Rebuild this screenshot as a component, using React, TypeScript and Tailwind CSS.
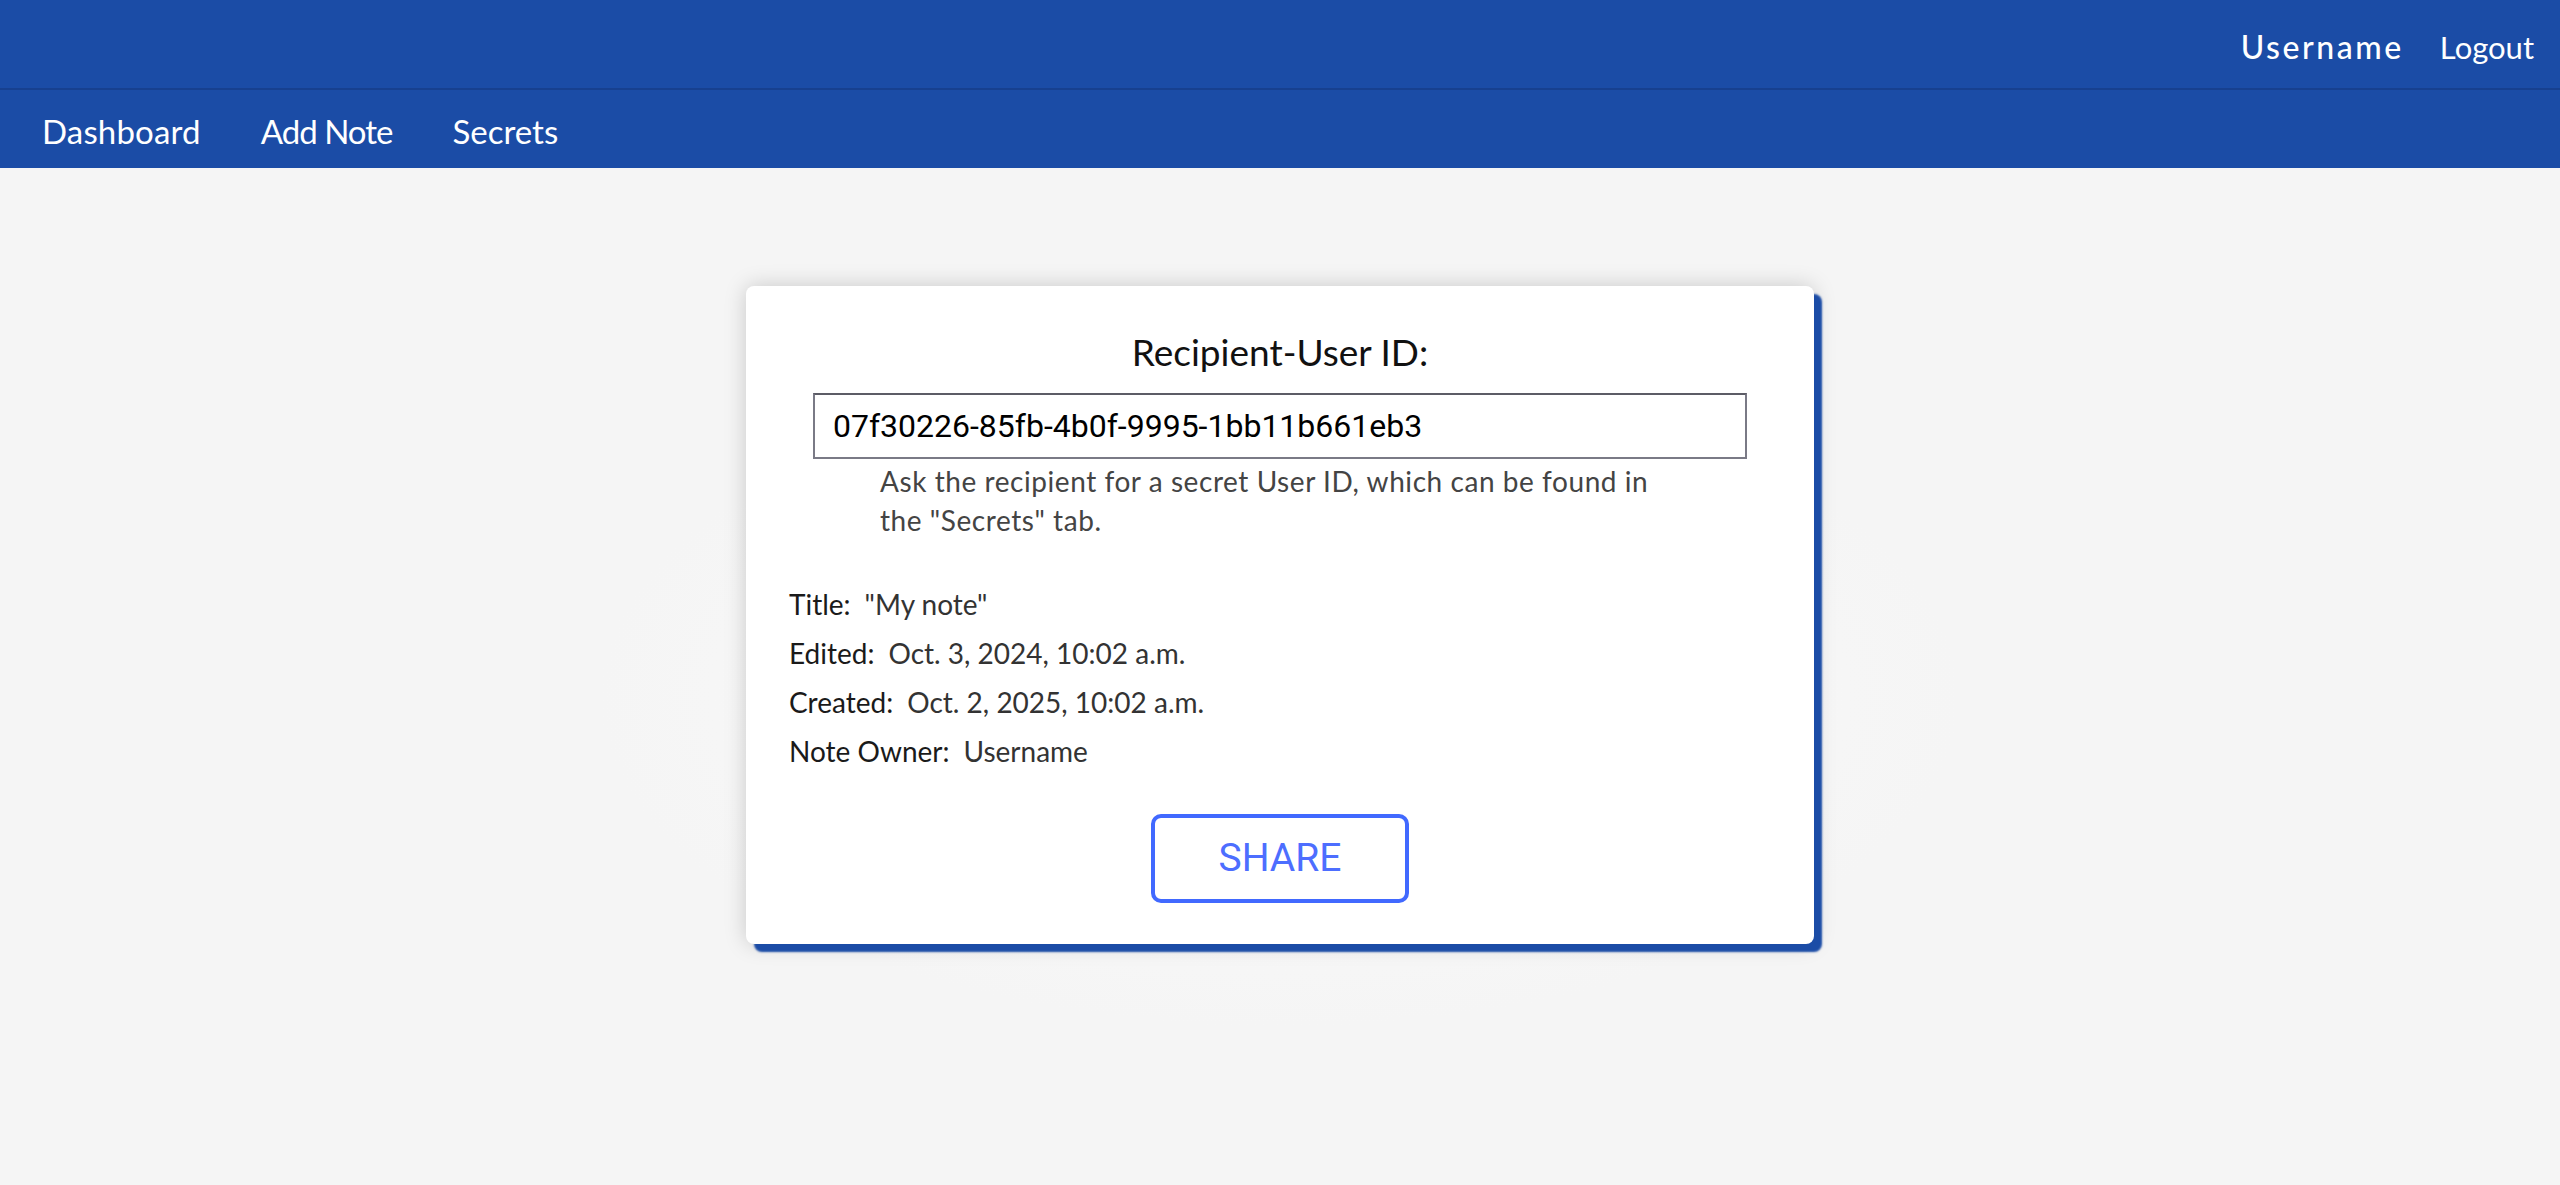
import { useState } from "react";

// Share-note page: top bar, nav and the share card
const navItems = [
  { label: "Dashboard", cls: "tracking-[0.005em]" },
  { label: "Add Note", cls: "tracking-[-0.03em]" },
  { label: "Secrets", cls: "tracking-[0em]" },
];

const details = [
  { label: "Title:", value: '"My note"' },
  { label: "Edited:", value: "Oct. 3, 2024, 10:02 a.m." },
  { label: "Created:", value: "Oct. 2, 2025, 10:02 a.m." },
  { label: "Note Owner:", value: "Username" },
];

function Header() {
  return (
    <header className="bg-[#1b4ca6] text-white font-['Lato',sans-serif]">
      {/* Top bar with user links */}
      <div className="h-[90px] flex items-center justify-end pt-[6px] pr-[26px] gap-[36px] border-b-2 border-[#17408f]">
        <span className="text-[32px] font-medium tracking-[0.08em]">Username</span>
        <button className="text-[31px]">Logout</button>
      </div>
      {/* Main navigation */}
      <nav className="h-[78px] flex items-center pt-[5px] pl-[42px] gap-[60px]">
        {navItems.map((item) => (
          <button key={item.label} className={`text-[33px] ${item.cls}`}>
            {item.label}
          </button>
        ))}
      </nav>
    </header>
  );
}

export default function App() {
  const [recipient, setRecipient] = useState("07f30226-85fb-4b0f-9995-1bb11b661eb3");

  return (
    <div className="min-h-[1185px] flex flex-col bg-[#f5f5f5]">
      <Header />
      <main className="flex-1 flex justify-center pt-[118px] bg-[radial-gradient(ellipse_680px_330px_at_50%_52%,#fbfbfb_0%,#f5f5f5_100%)]">
        <div className="w-[1068px] h-[658px] bg-white rounded-lg shadow-[8px_8px_2px_#1b4ca6,0_0_22px_rgba(0,0,0,0.18)] pt-[45px] pb-[41px] flex flex-col font-['Lato',sans-serif]">
          <h2 className="text-center text-[37px] leading-[42px] text-[#111]">Recipient-User ID:</h2>

          <input
            value={recipient}
            onChange={(e) => setRecipient(e.target.value)}
            className="mt-[20px] mx-auto w-[934px] h-[66px] border-2 border-[#7a7a86] border-t-[#5c5c66] px-[18px] text-[32px] text-black font-['Roboto',sans-serif] outline-none"
          />
          <p className="mt-[3px] mx-auto w-[800px] text-[28px] tracking-[0.02em] leading-[39px] text-[#444]">
            Ask the recipient for a secret User ID, which can be found in
            <br />
            the "Secrets" tab.
          </p>

          {/* Note details */}
          <div className="mt-[40px] pl-[43px] flex flex-col">
            {details.map((d) => (
              <div key={d.label} className="text-[28px] leading-[49px]">
                <span className="text-[#1a1a1a]">{d.label}</span>
                <span className="ml-[14px] text-[#333]">{d.value}</span>
              </div>
            ))}
          </div>

          <button className="mt-[38px] mx-auto w-[258px] h-[90px] border-4 border-[#4169ff] rounded-[10px] text-[39px] text-[#4d6eff] font-['Roboto',sans-serif]">
            SHARE
          </button>
        </div>
      </main>
    </div>
  );
}
